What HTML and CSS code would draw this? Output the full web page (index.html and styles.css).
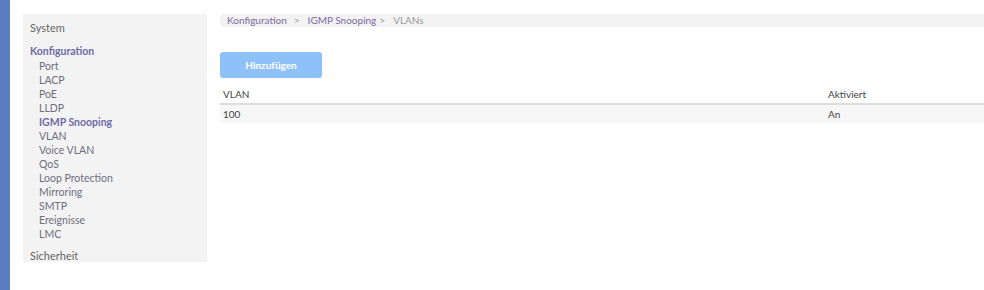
FILE: index.html
```html
<!DOCTYPE html>
<html>
<head>
<meta charset="utf-8">
<link rel="stylesheet" href="styles.css">
</head>
<body>
<div class="page">
  <div class="rail"></div>
  <nav class="sidebar">
    <div class="group">System</div>
    <div class="group active">Konfiguration</div>
    <ul class="items">
      <li>Port</li>
      <li>LACP</li>
      <li>PoE</li>
      <li>LLDP</li>
      <li class="current">IGMP Snooping</li>
      <li>VLAN</li>
      <li>Voice VLAN</li>
      <li>QoS</li>
      <li>Loop Protection</li>
      <li>Mirroring</li>
      <li>SMTP</li>
      <li>Ereignisse</li>
      <li>LMC</li>
    </ul>
    <div class="group last">Sicherheit</div>
  </nav>
  <main class="main">
    <div class="crumbs">
      <span class="link">Konfiguration</span><span class="sep">&gt;</span><span class="link">IGMP Snooping</span><span class="sep2">&gt;</span><span class="here">VLANs</span>
    </div>
    <button class="add">Hinzufügen</button>
    <table class="grid">
      <thead>
        <tr><th class="c1">VLAN</th><th>Aktiviert</th></tr>
      </thead>
      <tbody>
        <tr><td class="c1">100</td><td>An</td></tr>
      </tbody>
    </table>
  </main>
</div>
</body>
</html>
```
FILE: styles.css
```css
* { box-sizing: border-box; }
html, body { margin: 0; padding: 0; background: #fff; }
body { font-family: Lato, "Open Sans", sans-serif; font-size: 10px; color: #555; }
.page { display: flex; align-items: flex-start; height: 290px; }
.rail { width: 10px; height: 290px; background: #5b7dbf; flex: none; }
.sidebar { width: 184px; margin: 14px 0 0 13px; background: #f3f3f3; padding: 6px 0 0 7px; height: 248px; flex: none; }
.group { font-size: 11px; color: #666; line-height: 16px; }
.group.active { color: #6e6aa6; font-weight: 700; font-size: 10.5px; margin-top: 7px; }
.group.last { margin-top: 7px; }
.items { list-style: none; margin: 0; padding: 0 0 0 9px; }
.items li { line-height: 14px; color: #6e6e7e; font-size: 10.5px; }
.items li.current { color: #6e6aa6; font-weight: 700; }
.main { flex: 1; margin: 14px 0 0 13px; }
.crumbs { background: #f3f3f3; height: 13px; line-height: 13px; border-radius: 4px 0 0 4px; padding-left: 7px; font-size: 10px; white-space: nowrap; }
.link { color: #7a6aa0; }
.sep { color: #999; margin: 0 8px 0 7px; }
.sep2 { color: #999; margin: 0 8px 0 3px; }
.here { color: #999; }
.add { display: block; margin-top: 25px; width: 102px; height: 26px; border: none; border-radius: 3px; background: #8fc1f9; color: #fff; font-family: inherit; font-size: 10px; font-weight: 700; padding: 0; }
.grid { border-collapse: collapse; width: 100%; margin-top: 6px; }
.grid th, .grid td { text-align: left; font-weight: normal; color: #444; padding: 0 3px; height: 19px; font-size: 10px; }
.grid th { border-bottom: 2px solid #ddd; height: 20px; }
.grid td { background: #f7f7f7; height: 19px; }
.grid .c1 { width: 605px; }
```
